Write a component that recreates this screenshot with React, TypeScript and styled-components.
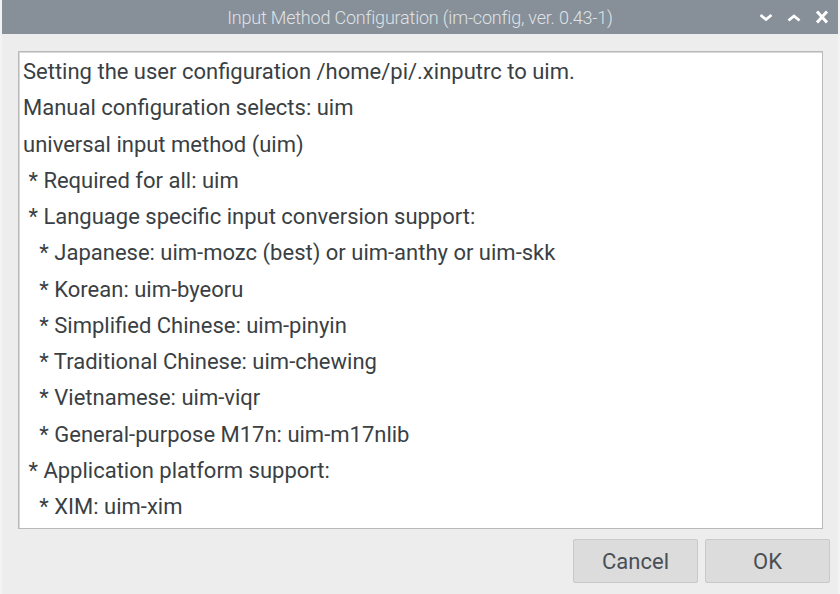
import React from "react";
import styled, { createGlobalStyle } from "styled-components";

const GlobalStyle = createGlobalStyle`
  html, body {
    margin: 0;
    padding: 0;
    background: #ededed;
  }
  body {
    font-family: Roboto, "Liberation Sans", sans-serif;
  }
`;

const Window = styled.div`
  width: 840px;
  height: 594px;
  display: flex;
  flex-direction: column;
  background: #ededed;
  border-left: 2px solid #f3f3f3;
  border-right: 2px solid #f3f3f3;
  box-sizing: border-box;
  overflow: hidden;
`;

const TitleBar = styled.div`
  height: 34px;
  flex: 0 0 34px;
  background: #878f99;
  display: flex;
  align-items: center;
  justify-content: center;
  position: relative;
  margin: 0 -2px;
`;

const Title = styled.div`
  color: #dfe3e7;
  font-size: 18px;
  font-weight: 300;
  letter-spacing: -0.2px;
`;

const Controls = styled.div`
  position: absolute;
  right: 11px;
  top: 0;
  height: 34px;
  display: flex;
  align-items: center;
  gap: 14px;
`;

const Body = styled.div`
  flex: 1;
  display: flex;
  flex-direction: column;
  padding: 17px 8px 11px 16px;
  gap: 10px;
`;

const TextArea = styled.div`
  flex: 1;
  margin-right: 7px;
  background: #fff;
  border: 1px solid #b9b9b9;
  box-shadow: inset 1px 1px 0 #d8d8d8;
  padding: 2px 4px 0;
  overflow: hidden;
`;

const Line = styled.div`
  font-size: 22px;
  line-height: 36.25px;
  color: #3a3f44;
  white-space: pre;
`;

const ButtonRow = styled.div`
  display: flex;
  justify-content: flex-end;
  gap: 7px;
`;

const Button = styled.button`
  width: 125px;
  height: 44px;
  background: #dcdcdc;
  border: 1px solid #c9c9c9;
  border-radius: 2px;
  font-family: Roboto, "Liberation Sans", sans-serif;
  font-size: 22px;
  color: #4a4f55;
  padding: 0;
`;

const lines = [
  "Setting the user configuration /home/pi/.xinputrc to uim.",
  "Manual configuration selects: uim",
  "universal input method (uim)",
  " * Required for all: uim",
  " * Language specific input conversion support:",
  "   * Japanese: uim-mozc (best) or uim-anthy or uim-skk",
  "   * Korean: uim-byeoru",
  "   * Simplified Chinese: uim-pinyin",
  "   * Traditional Chinese: uim-chewing",
  "   * Vietnamese: uim-viqr",
  "   * General-purpose M17n: uim-m17nlib",
  " * Application platform support:",
  "   * XIM: uim-xim",
];

const Icon = ({ d, w = 2.8 }: { d: string; w?: number }) => (
  <svg width="14" height="14" viewBox="0 0 14 14">
    <path d={d} stroke="#fff" strokeWidth={w} fill="none" strokeLinecap="butt" />
  </svg>
);

const App = () => {
  return (
    <>
      <GlobalStyle />
      <Window>
        <TitleBar>
          <Title>Input Method Configuration (im-config, ver. 0.43-1)</Title>
          <Controls>
            <Icon d="M1.5 5 L7 9.5 L12.5 5" />
            <Icon d="M1.5 10.5 L7 6 L12.5 10.5" />
            <Icon d="M2 1.5 L12 12.5 M12 1.5 L2 12.5" w={3} />
          </Controls>
        </TitleBar>
        <Body>
          <TextArea>
            {lines.map((l, i) => (
              <Line key={i}>{l}</Line>
            ))}
          </TextArea>
          <ButtonRow>
            <Button>Cancel</Button>
            <Button>OK</Button>
          </ButtonRow>
        </Body>
      </Window>
    </>
  );
};

export default App;
